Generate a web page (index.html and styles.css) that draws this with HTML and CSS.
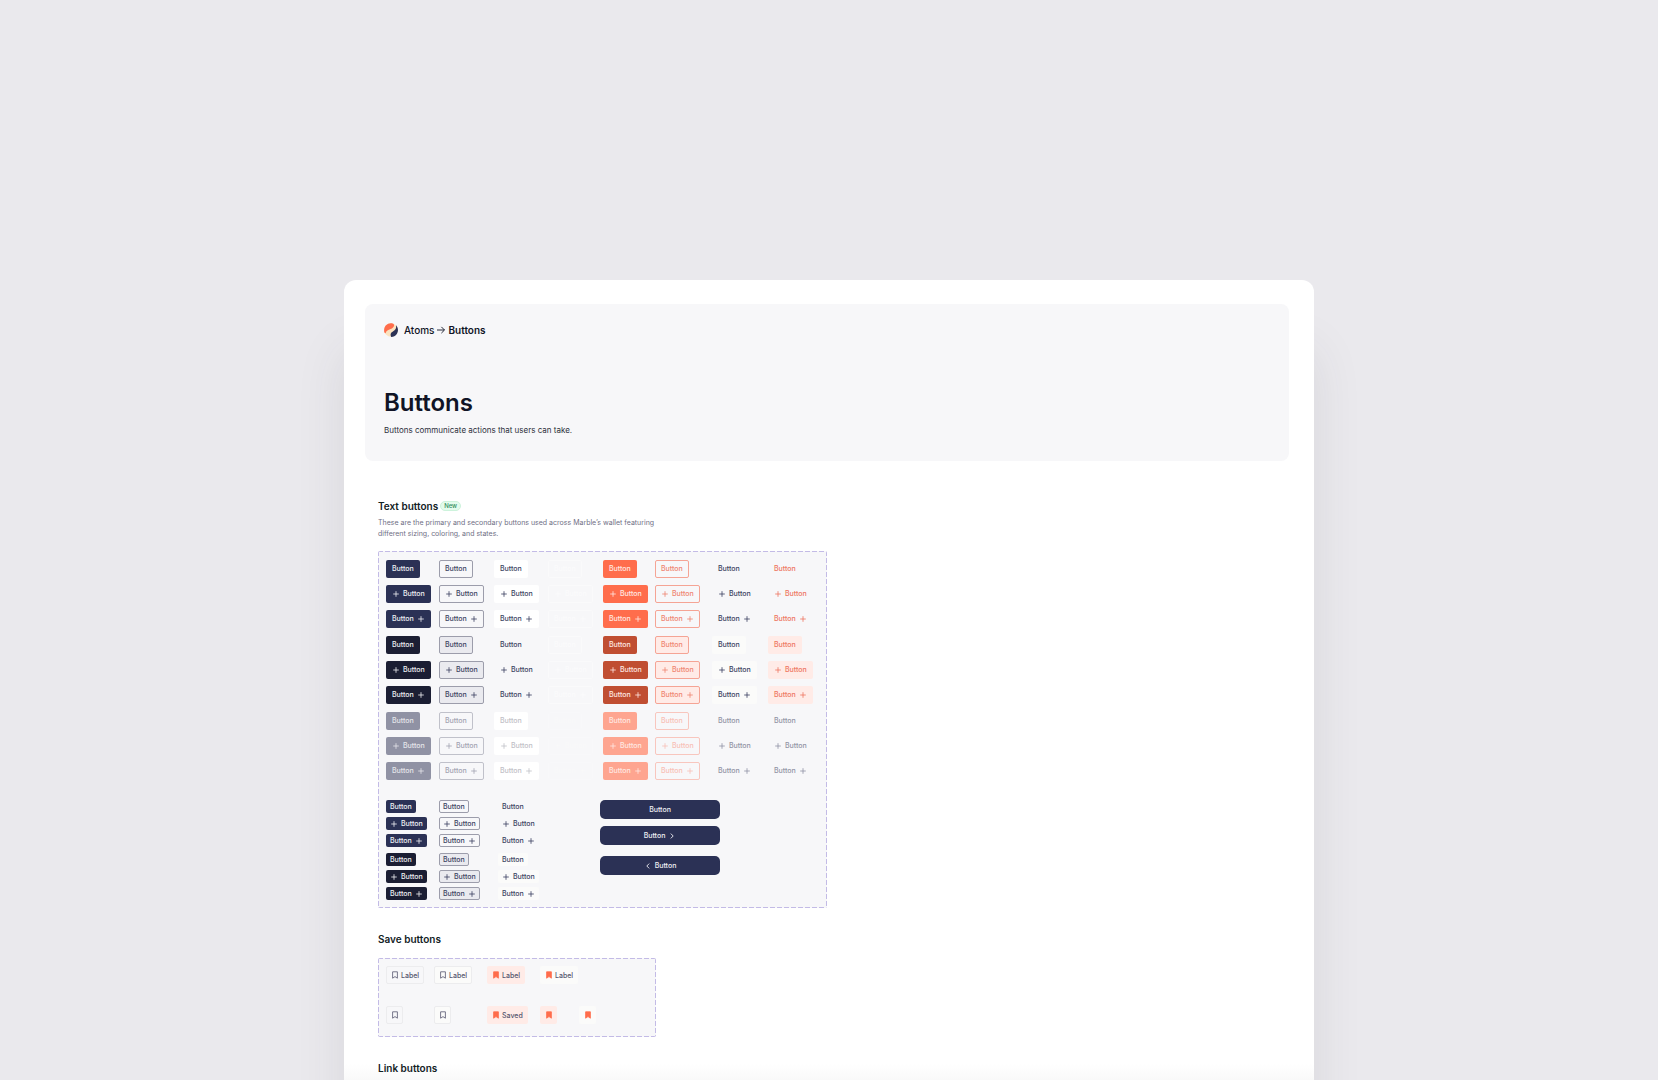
FILE: index.html
```
<!DOCTYPE html>
<html lang="en">
<head>
    <meta charset="UTF-8">
    <meta name="viewport" content="width=device-width, initial-scale=1.0">
    <title>Atoms - Buttons</title>
    <link rel="stylesheet" href="styles.css">
</head>
<body>
<svg class="sprite" aria-hidden="true">
    <symbol id="plus" viewBox="0 0 8 8">
        <path d="M4 1.2v5.6M1.2 4h5.6" fill="none" stroke="currentColor" stroke-width="0.8"/>
    </symbol>
    <symbol id="next" viewBox="0 0 8 8">
        <path d="M2.8 1.6L5.2 4 2.8 6.4" fill="none" stroke="currentColor" stroke-width="0.9"/>
    </symbol>
    <symbol id="prev" viewBox="0 0 8 8">
        <path d="M5.2 1.6L2.8 4l2.400 2.400" fill="none" stroke="currentColor" stroke-width="0.9"/>
    </symbol>
    <symbol id="bookmark" viewBox="0 0 6 8">
        <path d="M.6.8h4.800v6.400L3 5.600.6 7.200z" stroke="currentColor" stroke-width="0.8"/>
    </symbol>
</svg>
<main class="card">
    <header class="hero">
        <nav class="breadcrumb">
            <svg class="logo" viewBox="0 0 14 14" aria-hidden="true">
                <circle cx="7" cy="7" r="6.8" fill="#fbe3c0"/>
                <path d="M.2 8.800C-.5 3.800 2.800.1 7 .2c1.300 0 2 .3 2.600.9C11 3.200 9 5.200 6.600 6 4.200 6.800 2.200 7.600 1.600 10.200.8 9.900.3 9.600.2 8.800z" fill="#ff6d4c"/>
                <path d="M12 2.200c2.400 2.500 2.700 6.500.4 9.300-1.200 1.400-2.800 2.300-5.200 2.400-.9-1.500-.8-3.300.3-4.400C9 8 13 7 12 2.200z" fill="#2b3155"/>
            </svg>
            <a href="#">Atoms</a>
            <svg class="arrow" viewBox="0 0 10 10" aria-hidden="true"><path d="M1 5h7.400M5.400 1.900L8.500 5 5.400 8.100" fill="none" stroke="currentColor" stroke-width="0.9"/></svg>
            <span class="current">Buttons</span>
        </nav>
        <h1>Buttons</h1>
        <p>Buttons communicate actions that users can take.</p>
    </header>

    <section>
        <div class="section-title">
            <h2>Text buttons</h2>
            <span class="badge">New</span>
        </div>
        <p class="description">These are the primary and secondary buttons used across Marble’s wallet featuring different sizing, coloring, and states.</p>
        <div class="board text-board">
            <div class="states" id="largeButtons"></div>
            <div class="bottom">
                <div class="small-states" id="smallButtons"></div>
                <div class="wide-buttons">
                    <button class="btn wide">Button</button>
                    <button class="btn wide">Button<svg class="icon"><use href="#next"/></svg></button>
                    <button class="btn wide last"><svg class="icon"><use href="#prev"/></svg>Button</button>
                </div>
            </div>
        </div>
    </section>

    <section>
        <h2>Save buttons</h2>
        <div class="board save-board">
            <button class="save"><svg class="mark"><use href="#bookmark"/></svg>Label</button>
            <button class="save light"><svg class="mark"><use href="#bookmark"/></svg>Label</button>
            <button class="save saved"><svg class="mark"><use href="#bookmark"/></svg>Label</button>
            <button class="save saved plain"><svg class="mark"><use href="#bookmark"/></svg>Label</button>
            <span></span>
            <button class="save" aria-label="Save"><svg class="mark"><use href="#bookmark"/></svg></button>
            <button class="save light" aria-label="Save"><svg class="mark"><use href="#bookmark"/></svg></button>
            <button class="save saved"><svg class="mark"><use href="#bookmark"/></svg>Saved</button>
            <button class="save saved" aria-label="Saved"><svg class="mark"><use href="#bookmark"/></svg></button>
            <button class="save saved plain" aria-label="Saved"><svg class="mark"><use href="#bookmark"/></svg></button>
        </div>
    </section>

    <section>
        <h2>Link buttons</h2>
    </section>
</main>

<script>
    var icon = '<svg class="icon"><use href="#plus"/></svg>';
    var labels = ['Button', icon + 'Button', 'Button' + icon];

    // One group of rows per state: no icon, leading icon, trailing icon
    function addButtons(target, kinds, states, size) {
        states.forEach(function(state) {
            var group = document.createElement('div');
            group.className = 'group';
            labels.forEach(function(label) {
                kinds.forEach(function(kind) {
                    var button = document.createElement('button');
                    button.className = ['btn', size, kind, state].join(' ');
                    button.disabled = state === 'disabled';
                    button.innerHTML = label;
                    group.appendChild(button);
                });
            });
            document.getElementById(target).appendChild(group);
        });
    }

    addButtons('largeButtons',
        ['primary', 'outline', 'white', 'ghost', 'accent', 'accent-outline', 'text', 'accent-text'],
        ['default', 'hover', 'disabled'], 'large');
    addButtons('smallButtons', ['primary', 'outline', 'text'], ['default', 'hover'], 'small');
</script>
</body>
</html>
```
FILE: styles.css
```
* {
    box-sizing: border-box;
}

body {
    font-family: Inter, "Liberation Sans", sans-serif;
    background-color: #eae9ed;
    color: #101426;
    margin: 0;
    padding-top: 280px;
}

h1, h2, p {
    margin: 0;
}

button {
    font-family: inherit;
    cursor: pointer;
}

.sprite {
    display: none;
}

.card {
    width: 970px;
    max-width: 100%;
    min-height: calc(100vh - 280px);
    margin: 0 auto;
    padding: 24px 25px 0 21px;
    background: linear-gradient(to top, #f9f9f9, #fff 16px);
    border-radius: 12px 12px 0 0;
    box-shadow: 0 70px 50px rgba(60, 60, 66, 0.1);
}

.hero {
    padding: 18px 19px 25px;
    background-color: #f7f7f9;
    border-radius: 8px;
}

.breadcrumb {
    display: flex;
    align-items: center;
    font-size: 10px;
    line-height: 16px;
    font-weight: 500;
}

.breadcrumb a {
    color: inherit;
    text-decoration: none;
}

.logo {
    width: 14px;
    height: 14px;
    margin-right: 6px;
}

.arrow {
    width: 10px;
    height: 10px;
    margin: 0 2px;
}

.current {
    font-weight: 600;
}

h1 {
    margin-top: 49px;
    font-size: 24px;
    line-height: 32px;
    font-weight: 600;
}

.hero p {
    margin-top: 5px;
    font-size: 8px;
    line-height: 12px;
    color: #2c2f3b;
}

section {
    margin: 0 13px;
}

.hero + section {
    margin-top: 38px;
}

section + section {
    margin-top: 24px;
}

.section-title {
    display: flex;
    align-items: center;
    gap: 2px;
}

h2 {
    font-size: 10px;
    line-height: 14px;
    font-weight: 600;
    color: #12211f;
}

.badge {
    padding: 0 3px;
    font-size: 6px;
    line-height: 8px;
    font-weight: 500;
    color: #2f8a5b;
    background-color: #e3fbec;
    border: 1px solid #cdf3dc;
    border-radius: 6px;
}

.description {
    max-width: 290px;
    margin-top: 4px;
    font-size: 7px;
    line-height: 11px;
    color: #6f6f85;
}

/* The dashes are longer than the ones that a dashed border gives */
.board {
    --dash: #c3bbe6 0 5px, transparent 5px 7px;
    max-width: 100%;
    border: 1px solid transparent;
    border-radius: 2px;
    background:
        repeating-linear-gradient(to right, var(--dash)) top / 100% 1px no-repeat border-box,
        repeating-linear-gradient(to right, var(--dash)) bottom / 100% 1px no-repeat border-box,
        repeating-linear-gradient(to bottom, var(--dash)) left / 1px 100% no-repeat border-box,
        repeating-linear-gradient(to bottom, var(--dash)) right / 1px 100% no-repeat border-box,
        #f7f7f9;
}

.text-board {
    width: 449px;
    margin-top: 12px;
    padding: 8px 7px 7px;
}

.states {
    display: grid;
    gap: 8px;
}

.group {
    display: grid;
    grid-template-columns: 53px 55px 54px 55px 52px 57px 56px 1fr;
    gap: 7px 0;
    justify-items: start;
}

.btn {
    display: flex;
    align-items: center;
    justify-content: center;
    gap: 3px;
    height: 18px;
    padding: 0 5px;
    font-size: 7px;
    line-height: 10px;
    font-weight: 500;
    color: #3a3f60;
    background-color: transparent;
    border: 1px solid transparent;
    border-radius: 2px;
}

.icon {
    width: 8px;
    height: 8px;
}

.primary, .wide {
    color: #f1f1f5;
    background-color: #2b3155;
}

.primary.hover {
    background-color: #1b1e33;
}

.primary.disabled {
    color: #e6e6eb;
    background-color: #9092a4;
}

.outline {
    border-color: #9c9dab;
}

.outline.hover {
    background-color: #eaeaef;
}

.outline.disabled {
    color: #a2a3b1;
    border-color: #c0c1ca;
}

.white {
    background-color: #fff;
}

.white.hover {
    background-color: transparent;
}

.white.disabled {
    color: #bfc0c6;
    background-color: #fff;
}

.ghost {
    color: #fbfbfc;
    border-color: #fafafb;
}

.ghost.disabled {
    color: #f9f9fa;
    border-color: #f8f8fa;
}

.accent {
    color: #ffe9e3;
    background-color: #ff6d4c;
}

.accent.hover {
    background-color: #c04e32;
}

.accent.disabled {
    background-color: #fea590;
}

.accent-outline {
    color: #ef8470;
    border-color: #f5a495;
}

.accent-outline.hover {
    background-color: #ffebe7;
}

.accent-outline.disabled {
    color: #f7bfb6;
    border-color: #f8c6be;
}

.text.hover {
    background-color: #fbfbfa;
}

.accent-text {
    color: #ee7560;
}

.accent-text.hover {
    background-color: #ffebe7;
}

.text.disabled, .accent-text.disabled {
    color: #9193a4;
}

.bottom {
    display: flex;
    margin-top: 20px;
}

.small-states {
    display: grid;
    gap: 6px;
    width: 214px;
}

.small-states .group {
    grid-template-columns: 53px 59px 1fr;
    gap: 4px 0;
}

.small {
    height: 13px;
    padding: 0 3px;
}

.wide {
    width: 120px;
    height: 19px;
    margin-bottom: 7px;
    border-radius: 5px;
}

.wide.last {
    margin-top: 11px;
}

.save-board {
    display: grid;
    grid-template-columns: 48px 53px 53px 39px 1fr;
    gap: 22px 0;
    justify-items: start;
    width: 278px;
    margin-top: 12px;
    padding: 7px 7px 12px;
}

.save {
    display: flex;
    align-items: center;
    gap: 3px;
    height: 18px;
    padding: 0 4px 0 5px;
    font-size: 7px;
    font-weight: 500;
    color: #55566e;
    background-color: transparent;
    border: 1px solid #ececee;
    border-radius: 2px;
}

.mark {
    width: 6px;
    height: 8px;
    fill: none;
}

.light {
    background-color: #fbfbfa;
}

.saved {
    background-color: #ffebe7;
    border-color: transparent;
}

.plain {
    background-color: #fbfbfa;
}

.saved .mark {
    color: #ff6d4c;
    fill: #ff6d4c;
}
```
